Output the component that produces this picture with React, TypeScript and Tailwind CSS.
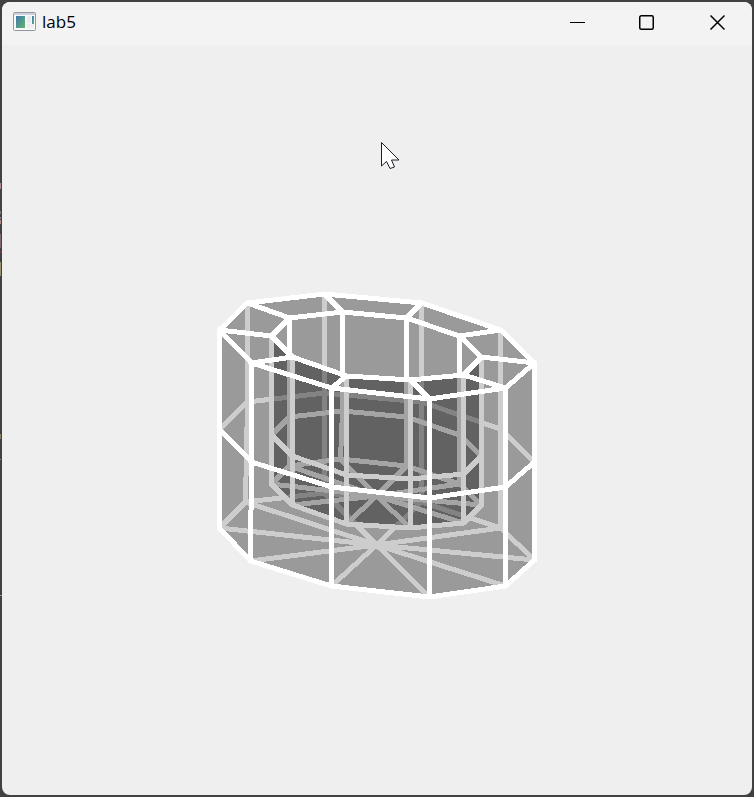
import React from "react";

type Point = [number, number];

const outerTop: Point[] = [
  [220, 330], [248, 303], [325, 294], [422, 303], [501, 330],
  [535, 363], [506, 388], [430, 399], [332, 388], [252, 363],
];
const outerBottom: Point[] = [
  [220, 528], [246, 502], [325, 493], [422, 502], [501, 528],
  [535, 560], [506, 586], [430, 597], [332, 586], [251, 561],
];
const innerTop: Point[] = [
  [272, 336], [290, 318], [343, 312], [407, 318], [460, 336],
  [482, 357], [464, 375], [411, 380], [347, 376], [293, 357],
];
const innerBottom: Point[] = [
  [272, 484], [290, 466], [341, 459], [407, 466], [460, 484],
  [482, 505], [464, 523], [411, 528], [347, 524], [293, 505],
];
const lower = (ring: Point[], by: number): Point[] => ring.map(([x, y]) => [x, y + by]);
const outerMiddle = lower(outerTop, 99);
const innerMiddle = lower(innerTop, 99);

const BACK = [0, 1, 2, 3, 4];
const FRONT = [5, 6, 7, 8, 9];

const walls = (rings: Point[][], sides: number[]): Point[][] =>
  rings.slice(1).flatMap((ring, level) =>
    sides.map((i) => {
      const j = (i + 1) % 10;
      return [rings[level][i], rings[level][j], ring[j], ring[i]];
    }),
  );

const fan = (ring: Point[], centre: Point): Point[][] =>
  ring.map((p, i) => [centre, p, ring[(i + 1) % 10]]);

// Ordered from the farthest surface to the nearest.
const layers: Point[][][] = [
  [...walls([outerTop, outerMiddle, outerBottom], BACK), ...fan(outerBottom, [377, 545])],
  [...walls([innerTop, innerMiddle, innerBottom], BACK), ...fan(innerBottom, [377, 496])],
  walls([innerTop, innerMiddle, innerBottom], FRONT),
  [
    ...walls([outerTop, innerTop], [...BACK, ...FRONT]),
    ...walls([outerTop, outerMiddle, outerBottom], FRONT),
  ],
];

const path = (points: Point[]) => `M${points.map((p) => p.join(" ")).join("L")}Z`;

function Layer({ faces }: { faces: Point[][] }) {
  return (
    <g>
      {faces.map((face, i) => (
        <path key={i} d={path(face)} fill="#000" fillOpacity={0.195} />
      ))}
      <path
        d={faces.map(path).join("")}
        fill="none"
        stroke="#fff"
        strokeWidth={5}
        strokeLinejoin="round"
      />
    </g>
  );
}

function AppIcon() {
  return (
    <svg width="24" height="20" viewBox="0 0 24 20" aria-hidden="true">
      <defs>
        <linearGradient id="pane" x1="0" y1="0" x2="1" y2="1">
          <stop offset="0" stopColor="#3f78ad" />
          <stop offset="1" stopColor="#62b56f" />
        </linearGradient>
      </defs>
      <rect x="0.5" y="0.5" width="22" height="18" rx="1" fill="#f7f8fa" stroke="#92979f" />
      <path d="M1 2h21" stroke="#ccd2dc" strokeWidth="2" />
      <rect x="3" y="4" width="9" height="12" fill="url(#pane)" />
      <rect x="14" y="4" width="4" height="7" fill="#e8eaec" />
      <rect x="14" y="12" width="7" height="4" fill="#eceef0" />
      <rect x="19" y="4" width="2" height="8" fill="url(#pane)" />
    </svg>
  );
}

// Slivers of the window behind, visible along the left border.
function Backdrop() {
  return (
    <div aria-hidden="true" className="absolute left-0 top-0 w-0.5">
      <div className="mt-[183px] h-1.5 w-px bg-[#b48a94]" />
      <div className="mt-[22px] h-[3px] w-px bg-[#7f7780]" />
      <div className="mt-[3px] h-[2px] w-px bg-[#8d8088]" />
      <div className="mt-[1px] h-1 w-px bg-[#b58a86]" />
      <div className="mt-[10px] h-[14px] w-px bg-[#806870]" />
      <div className="mt-[3px] h-[2px] w-0.5 bg-[#6b3d38]" />
      <div className="mt-[9px] h-[14px] w-px bg-[#99906f]" />
      <div className="mt-[158px] h-[5px] w-px bg-[#8c8265]" />
      <div className="mt-[20px] h-px w-px bg-[#8a8a8a]" />
      <div className="mt-[135px] h-px w-0.5 bg-[#8fa09a]" />
    </div>
  );
}

const control = "flex h-full w-[70px] items-center justify-center pb-1 text-black hover:bg-black/5";

export default function App() {
  return (
    <div className="relative flex min-h-screen flex-col bg-[#414141] p-0.5 font-['Open_Sans','Noto_Sans',sans-serif]">
      <Backdrop />
      <div className="flex grow flex-col overflow-hidden rounded-lg bg-[#efefef]">
        <header className="flex h-[43px] shrink-0 items-center justify-between bg-[#f3f3f3] pl-[11px]">
          <div className="flex items-center gap-[5px] pb-1">
            <AppIcon />
            <h1 className="text-[17px] leading-6 text-black">lab5</h1>
          </div>
          <div className="flex h-full">
            <button type="button" aria-label="Minimize" className={control}>
              <svg width="16" height="16" viewBox="0 0 16 16" shapeRendering="crispEdges">
                <path d="M1 8h15v1H1z" fill="currentColor" />
              </svg>
            </button>
            <button type="button" aria-label="Maximize" className={control}>
              <svg width="16" height="16" viewBox="0 0 16 16">
                <rect x="0.750" y="1.750" width="13.500" height="13.500" rx="1.500" fill="none" stroke="currentColor" strokeWidth="1.500" />
              </svg>
            </button>
            <button type="button" aria-label="Close" className={control}>
              <svg width="16" height="16" viewBox="0 0 16 16">
                <path d="M1.500 1.500l14 14M15.500 1.500l-14 14" fill="none" stroke="currentColor" strokeWidth="1.500" />
              </svg>
            </button>
          </div>
        </header>
        <main className="flex grow items-center justify-center">
          <svg
            viewBox="2 45 750 750"
            className="w-full"
            role="img"
            aria-label="Hollow ten-sided prism"
            shapeRendering="crispEdges"
          >
            <g transform="translate(-0.5 0)">
              {layers.map((faces, i) => (
                <Layer key={i} faces={faces} />
              ))}
            </g>
            <path
              d="M381.500 142.500v23.500l5-4.500 3.500 7 4.500-1.500-3-7h7.500z"
              fill="#fff"
              stroke="#1c1c28"
              shapeRendering="auto"
            />
          </svg>
        </main>
      </div>
    </div>
  );
}
